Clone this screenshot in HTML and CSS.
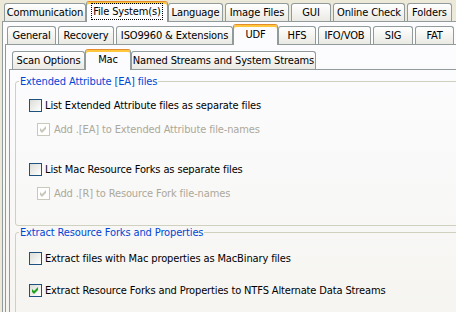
FILE: index.html
```html
<!DOCTYPE html>
<html>
<head>
  <link rel="stylesheet" href="styles.css">
</head>
<body>
<div class="tabctl outer">
  <div class="tabrow">
    <div class="tab w-comm">Communication</div>
    <div class="tab sel w-fs"><span class="focus">File System(s)</span></div>
    <div class="tab w-lang">Language</div>
    <div class="tab w-img">Image Files</div>
    <div class="tab w-gui">GUI</div>
    <div class="tab w-online">Online Check</div>
    <div class="tab w-fold">Folders</div>
  </div>
  <div class="panel">

    <div class="tabctl middle">
      <div class="tabrow">
        <div class="tab w-gen">General</div>
        <div class="tab w-rec">Recovery</div>
        <div class="tab w-iso">ISO9960 &amp; Extensions</div>
        <div class="tab sel w-udf">UDF</div>
        <div class="tab w-hfs">HFS</div>
        <div class="tab w-ifo">IFO/VOB</div>
        <div class="tab w-sig">SIG</div>
        <div class="tab w-fat">FAT</div>
      </div>
      <div class="panel">

        <div class="tabctl inner">
          <div class="tabrow">
            <div class="tab w-scan">Scan Options</div>
            <div class="tab sel w-mac">Mac</div>
            <div class="tab w-named">Named Streams and System Streams</div>
          </div>
          <div class="panel page">

            <fieldset class="group">
              <legend>Extended Attribute [EA] files</legend>
              <div class="opts">
                <label class="opt"><span class="cb"></span>List Extended Attribute files as separate files</label>
                <label class="opt sub dis"><span class="cb"><svg width="11" height="11" viewBox="0 0 11 11"><path d="M2 4 L4 6 L8 2 L8 5 L4 9 L2 7 Z"/></svg></span>Add .[EA] to Extended Attribute file-names</label>
                <label class="opt far"><span class="cb"></span>List Mac Resource Forks as separate files</label>
                <label class="opt sub dis"><span class="cb"><svg width="11" height="11" viewBox="0 0 11 11"><path d="M2 4 L4 6 L8 2 L8 5 L4 9 L2 7 Z"/></svg></span>Add .[R] to Resource Fork file-names</label>
              </div>
            </fieldset>

            <fieldset class="group last">
              <legend>Extract Resource Forks and Properties</legend>
              <div class="opts wide">
                <label class="opt"><span class="cb"></span>Extract files with Mac properties as MacBinary files</label>
                <label class="opt on"><span class="cb"><svg width="11" height="11" viewBox="0 0 11 11"><path d="M2 4 L4 6 L8 2 L8 5 L4 9 L2 7 Z"/></svg></span>Extract Resource Forks and Properties to NTFS Alternate Data Streams</label>
              </div>
            </fieldset>

          </div>
        </div>

      </div>
    </div>

  </div>
</div>
</body>
</html>
```

FILE: styles.css
```css
html, body {
  overflow: hidden;
}

body {
  margin: 0;
  width: 456px;
  height: 312px;
  background-color: #ECE9D8;
  font-family: "DejaVu Sans Condensed", "DejaVu Sans", sans-serif;
  font-stretch: condensed;
  font-size: 11px;
  letter-spacing: -0.13px;
  color: #000;
}

/* tab controls, nested three deep */
.tabctl {
  display: flex;
  flex-direction: column;
}

.outer {
  margin: 3px 0 0 2px;
  width: 500px;
  height: 330px;
}

.middle {
  flex: 1;
  margin: 4px 0 0 2px;
}

.inner {
  flex: 1;
  margin: 6px 0 0 3px;
}

.tabrow {
  display: flex;
  align-items: flex-start;
  gap: 2px;
  height: 18px;
  padding-left: 2px;
}

.inner > .tabrow {
  padding-left: 3px;
}

.tab {
  flex: none;
  box-sizing: border-box;
  height: 18px;
  display: flex;
  align-items: center;
  justify-content: center;
  white-space: nowrap;
  border: 1px solid #919B9C;
  border-bottom: none;
  border-radius: 3px 3px 0 0;
  background: linear-gradient(#FFFFFF, #EAE9E3);
}

.tab.sel {
  position: relative;
  z-index: 1;
  height: 21px;
  margin: -2px -2px 0;
  padding-bottom: 1px;
  background: #FCFCFE;
  border-top: 1px solid #E68B2C;
  box-shadow: inset 0 2px #FFC83C;
}

.focus {
  outline: 1px dotted #000;
  outline-offset: 1px;
}

.panel {
  flex: 1;
  display: flex;
  flex-direction: column;
  border: 1px solid #919B9C;
  background: linear-gradient(#FCFCFE, #F4F3EE 290px);
}

/* tab widths (row 1) */
.w-comm { width: 82px; }
.w-fs { width: 82px; }
.w-lang { width: 55px; }
.w-img { width: 64px; }
.w-gui { width: 40px; }
.w-online { width: 72px; }
.w-fold { width: 45px; }

/* row 2 */
.w-gen { width: 49px; }
.w-rec { width: 56px; }
.w-iso { width: 117px; }
.w-udf { width: 45px; }
.w-hfs { width: 38px; }
.w-ifo { width: 53px; }
.w-sig { width: 40px; }
.w-fat { width: 39px; }

/* row 3 */
.w-scan { width: 73px; }
.w-mac { width: 46px; }
.w-named { width: 185px; }

/* group boxes */
.group {
  margin: 5px 0 0 5px;
  padding: 0 0 25px 3px;
  border: 1px solid #D0D0BF;
  border-radius: 3px;
  min-width: 0;
}

.group.last {
  margin-top: 0;
  padding-bottom: 40px;
}

.group legend {
  padding: 0 1px;
  line-height: 13px;
  color: #0046D5;
}

.opts {
  display: flex;
  flex-direction: column;
  padding: 11px 0 0 10px;
}

.opts.wide {
  padding-top: 13px;
}

.opt {
  display: flex;
  align-items: center;
  gap: 3px;
  height: 13px;
  margin-top: 11px;
  white-space: nowrap;
}

.opt:first-child {
  margin-top: 0;
}

.opt.far {
  margin-top: 27px;
}

.wide .opt + .opt {
  margin-top: 19px;
}

.opt.sub {
  margin-left: 8px;
  gap: 4px;
}

.cb {
  flex: none;
  box-sizing: border-box;
  width: 13px;
  height: 13px;
  border: 1px solid #1C5180;
  background: linear-gradient(135deg, #DCDCD7, #FFFFFF);
}

.cb svg {
  display: block;
}

.on .cb svg {
  fill: #21A121;
}

.dis {
  color: #ACA899;
}

.dis .cb {
  border-color: #CAC8BB;
  background: #FFFFFF;
}

.dis .cb svg {
  fill: #CAC8BB;
}
```
